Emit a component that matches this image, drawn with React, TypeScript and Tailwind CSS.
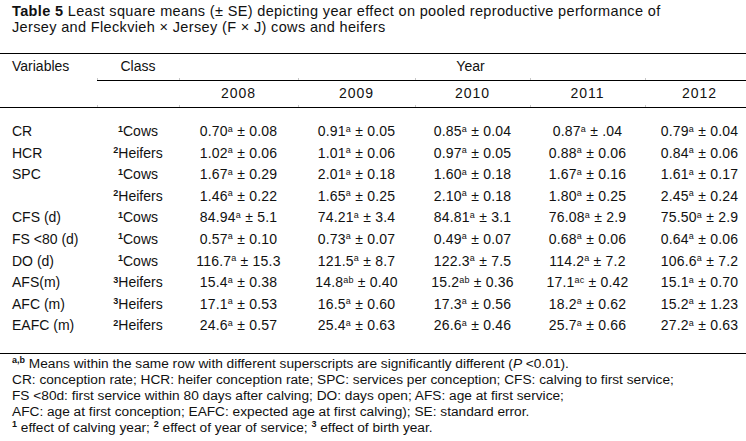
const cols = "grid grid-cols-[97px_82px_119px_117px_115px_115px_101px]";

type Cell = { v: string; s: string; e: string };

const rows: { name: string; cn: string; cls: string; vals: Cell[] }[] = [
  { name: "CR", cn: "1", cls: "Cows", vals: [
    { v: "0.70", s: "a", e: "0.08" }, { v: "0.91", s: "a", e: "0.05" }, { v: "0.85", s: "a", e: "0.04" }, { v: "0.87", s: "a", e: ".04" }, { v: "0.79", s: "a", e: "0.04" } ] },
  { name: "HCR", cn: "2", cls: "Heifers", vals: [
    { v: "1.02", s: "a", e: "0.06" }, { v: "1.01", s: "a", e: "0.06" }, { v: "0.97", s: "a", e: "0.05" }, { v: "0.88", s: "a", e: "0.06" }, { v: "0.84", s: "a", e: "0.06" } ] },
  { name: "SPC", cn: "1", cls: "Cows", vals: [
    { v: "1.67", s: "a", e: "0.29" }, { v: "2.01", s: "a", e: "0.18" }, { v: "1.60", s: "a", e: "0.18" }, { v: "1.67", s: "a", e: "0.16" }, { v: "1.61", s: "a", e: "0.17" } ] },
  { name: "", cn: "2", cls: "Heifers", vals: [
    { v: "1.46", s: "a", e: "0.22" }, { v: "1.65", s: "a", e: "0.25" }, { v: "2.10", s: "a", e: "0.18" }, { v: "1.80", s: "a", e: "0.25" }, { v: "2.45", s: "a", e: "0.24" } ] },
  { name: "CFS (d)", cn: "1", cls: "Cows", vals: [
    { v: "84.94", s: "a", e: "5.1" }, { v: "74.21", s: "a", e: "3.4" }, { v: "84.81", s: "a", e: "3.1" }, { v: "76.08", s: "a", e: "2.9" }, { v: "75.50", s: "a", e: "2.9" } ] },
  { name: "FS <80 (d)", cn: "1", cls: "Cows", vals: [
    { v: "0.57", s: "a", e: "0.10" }, { v: "0.73", s: "a", e: "0.07" }, { v: "0.49", s: "a", e: "0.07" }, { v: "0.68", s: "a", e: "0.06" }, { v: "0.64", s: "a", e: "0.06" } ] },
  { name: "DO (d)", cn: "1", cls: "Cows", vals: [
    { v: "116.7", s: "a", e: "15.3" }, { v: "121.5", s: "a", e: "8.7" }, { v: "122.3", s: "a", e: "7.5" }, { v: "114.2", s: "a", e: "7.2" }, { v: "106.6", s: "a", e: "7.2" } ] },
  { name: "AFS(m)", cn: "3", cls: "Heifers", vals: [
    { v: "15.4", s: "a", e: "0.38" }, { v: "14.8", s: "ab", e: "0.40" }, { v: "15.2", s: "ab", e: "0.36" }, { v: "17.1", s: "ac", e: "0.42" }, { v: "15.1", s: "a", e: "0.70" } ] },
  { name: "AFC (m)", cn: "3", cls: "Heifers", vals: [
    { v: "17.1", s: "a", e: "0.53" }, { v: "16.5", s: "a", e: "0.60" }, { v: "17.3", s: "a", e: "0.56" }, { v: "18.2", s: "a", e: "0.62" }, { v: "15.2", s: "a", e: "1.23" } ] },
  { name: "EAFC (m)", cn: "2", cls: "Heifers", vals: [
    { v: "24.6", s: "a", e: "0.57" }, { v: "25.4", s: "a", e: "0.63" }, { v: "26.6", s: "a", e: "0.46" }, { v: "25.7", s: "a", e: "0.66" }, { v: "27.2", s: "a", e: "0.63" } ] },
];

const years = ["2008", "2009", "2010", "2011", "2012"];

function Ticks() {
  // faint cell-border stubs left over above each rule
  const widths = [97, 82, 119, 117, 115, 115, 101];
  return (
    <div className="flex h-[2px]">
      {widths.map((w, i) => (
        <div key={i} style={{ width: w }} className={i > 0 ? "border-l border-[#c8c8c8]" : ""} />
      ))}
    </div>
  );
}

export default function App() {
  return (
    <div
      className="w-[746px] h-[441px] bg-white text-[#111] overflow-hidden"
      style={{ fontFamily: '"Liberation Sans", Arial, sans-serif' }}
    >
      {/* caption */}
      <div className="px-3 pt-[3px] text-[14.5px] leading-[16px] tracking-[0.35px]">
        <p>
          <b>Table 5</b> Least square means (± SE) depicting year effect on pooled reproductive performance of
        </p>
        <p>Jersey and Fleckvieh × Jersey (F × J) cows and heifers</p>
      </div>

      <div className="mt-[18px] border-t border-black" />

      {/* header */}
      <div className={`${cols} h-[24px] items-center text-[14px]`}>
        <div className="pl-3">Variables</div>
        <div className="text-center">Class</div>
        <div className="col-span-5 pl-4 text-center">Year</div>
      </div>
      <Ticks />
      <div className="ml-[97px] border-t border-black" />
      <div className={`${cols} h-[24px] items-center text-[14px] tracking-[1px]`}>
        <div />
        <div />
        {years.map((y, i) => (
          <div key={y} className={`text-center ${i === 4 ? "pl-2" : ""}`}>{y}</div>
        ))}
      </div>
      <Ticks />
      <div className="border-t border-black" />

      {/* body */}
      <div className="pt-[13px] pb-[16px] text-[14px] tracking-[0.2px]">
        {rows.map((r, ri) => (
          <div key={ri} className={`${cols} h-[21.6px] leading-[21.6px]`}>
            <div className="pl-3 tracking-normal">{r.name}</div>
            <div className="text-center tracking-normal">
              <sup className="text-[9px] font-bold">{r.cn}</sup>
              {r.cls}
            </div>
            {r.vals.map((c, ci) => (
              <div key={ci} className={`text-center whitespace-nowrap ${ci === 4 ? "pl-2" : ""}`}>
                {c.v}
                <sup className="text-[9px]">{c.s}</sup> ± {c.e}
              </div>
            ))}
          </div>
        ))}
      </div>

      <div className="border-t border-black" />

      {/* notes */}
      <div className="px-3 pt-[2px] text-[13.7px] leading-[16px]">
        <p>
          <sup className="text-[9px] font-bold">a,b</sup> Means within the same row with different superscripts are significantly different (<i>P</i> &lt;0.01).
        </p>
        <p>CR: conception rate; HCR: heifer conception rate; SPC: services per conception; CFS: calving to first service;</p>
        <p>FS &lt;80d: first service within 80 days after calving; DO: days open; AFS: age at first service;</p>
        <p>AFC: age at first conception; EAFC: expected age at first calving); SE: standard error.</p>
        <p>
          <sup className="text-[9px] font-bold">1</sup> effect of calving year; <sup className="text-[9px] font-bold">2</sup> effect of year of service; <sup className="text-[9px] font-bold">3</sup> effect of birth year.
        </p>
      </div>
    </div>
  );
}
